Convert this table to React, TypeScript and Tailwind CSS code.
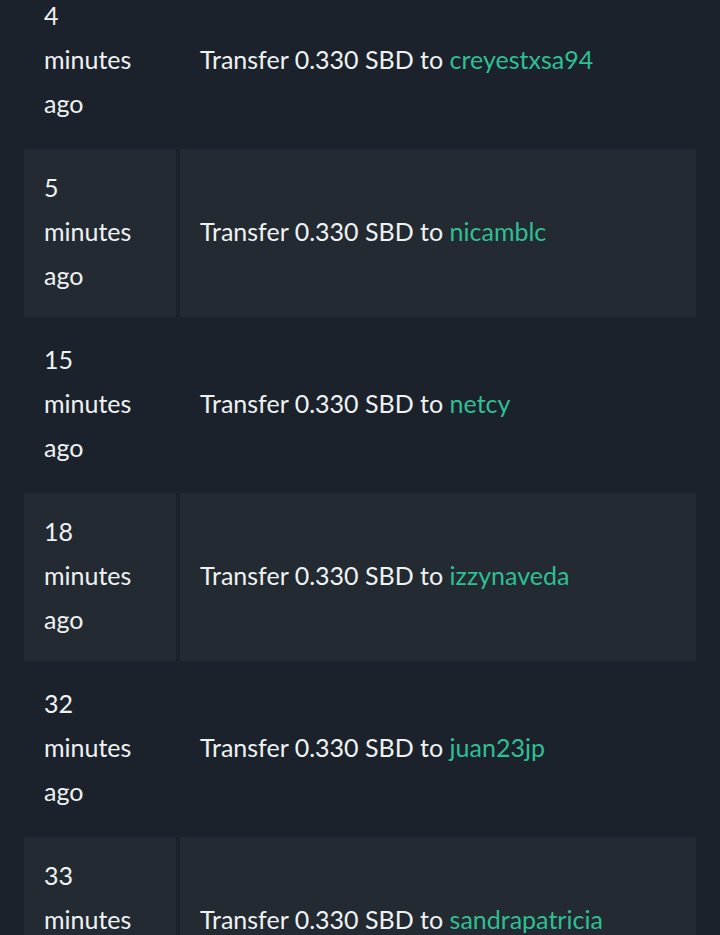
import React from "react";

type Row = { ago: number; amount: string; to: string };

const ROWS: Row[] = [
  { ago: 4, amount: "0.330", to: "creyestxsa94" },
  { ago: 5, amount: "0.330", to: "nicamblc" },
  { ago: 15, amount: "0.330", to: "netcy" },
  { ago: 18, amount: "0.330", to: "izzynaveda" },
  { ago: 32, amount: "0.330", to: "juan23jp" },
  { ago: 33, amount: "0.330", to: "sandrapatricia" },
];

export default function App() {
  return (
    <div
      className="w-[720px] h-[935px] overflow-hidden bg-[#1c222b] text-[#eef2f3]"
      style={{ fontFamily: "Lato, 'Open Sans', sans-serif" }}
    >
      <div className="px-5 -mt-[27px]">
        <table className="w-full border-separate border-spacing-1 text-[25px] leading-[44px]">
          <tbody>
            {ROWS.map((r, i) => {
              const striped = i % 2 === 1;
              const cell = striped ? "bg-[#232a31]" : "";
              return (
                <tr key={r.ago} className="h-[168px]">
                  <td className={`w-[152px] px-5 pt-[16px] pb-[20px] align-middle ${cell}`}>
                    {r.ago}
                    <br />
                    minutes
                    <br />
                    ago
                  </td>
                  <td className={`px-5 pt-[16px] pb-[20px] align-middle ${cell}`}>
                    Transfer {r.amount} SBD to{" "}
                    <span className="text-[#2fbf94]">{r.to}</span>
                  </td>
                </tr>
              );
            })}
          </tbody>
        </table>
      </div>
    </div>
  );
}
